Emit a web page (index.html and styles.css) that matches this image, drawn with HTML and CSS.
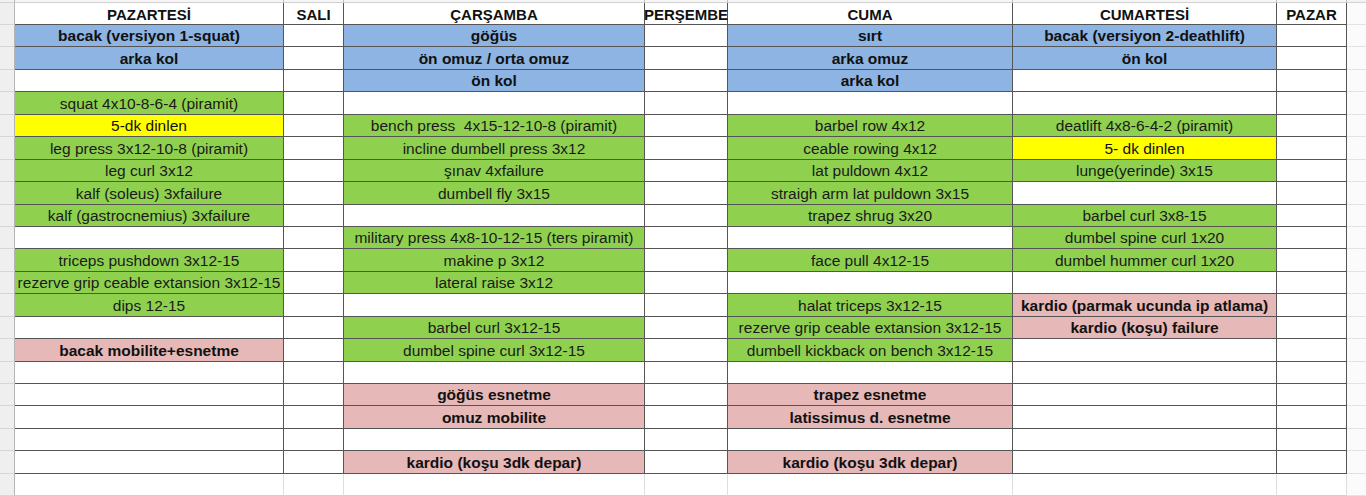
FILE: index.html
```html
<!DOCTYPE html>
<html lang="tr">
<head>
<meta charset="utf-8">
<title>Antrenman programı</title>
<link rel="stylesheet" href="styles.css">
</head>
<body>
<div class="sheet">
  <div class="row top"><div class="gut"></div><div class="c"></div><div class="c"></div><div class="c"></div><div class="c"></div><div class="c"></div><div class="c"></div><div class="c"></div><div class="rg"></div></div>

  <div class="row head"><div class="gut"></div><div class="c">PAZARTESİ</div><div class="c">SALI</div><div class="c">ÇARŞAMBA</div><div class="c">PERŞEMBE</div><div class="c">CUMA</div><div class="c">CUMARTESİ</div><div class="c">PAZAR</div><div class="rg"></div></div>

  <div class="row"><div class="gut"></div><div class="c b">bacak (versiyon 1-squat)</div><div class="c"></div><div class="c b">göğüs</div><div class="c"></div><div class="c b">sırt</div><div class="c b">bacak (versiyon 2-deathlift)</div><div class="c"></div><div class="rg"></div></div>

  <div class="row"><div class="gut"></div><div class="c b">arka kol</div><div class="c"></div><div class="c b">ön omuz / orta omuz</div><div class="c"></div><div class="c b">arka omuz</div><div class="c b">ön kol</div><div class="c"></div><div class="rg"></div></div>

  <div class="row"><div class="gut"></div><div class="c"></div><div class="c"></div><div class="c b">ön kol</div><div class="c"></div><div class="c b">arka kol</div><div class="c"></div><div class="c"></div><div class="rg"></div></div>

  <div class="row"><div class="gut"></div><div class="c g">squat 4x10-8-6-4 (piramit)</div><div class="c"></div><div class="c"></div><div class="c"></div><div class="c"></div><div class="c"></div><div class="c"></div><div class="rg"></div></div>

  <div class="row"><div class="gut"></div><div class="c y">5-dk dinlen</div><div class="c"></div><div class="c g">bench press &nbsp;4x15-12-10-8 (piramit)</div><div class="c"></div><div class="c g">barbel row 4x12</div><div class="c g">deatlift 4x8-6-4-2 (piramit)</div><div class="c"></div><div class="rg"></div></div>

  <div class="row"><div class="gut"></div><div class="c g">leg press 3x12-10-8 (piramit)</div><div class="c"></div><div class="c g">incline dumbell press 3x12</div><div class="c"></div><div class="c g">ceable rowing 4x12</div><div class="c y">5- dk dinlen</div><div class="c"></div><div class="rg"></div></div>

  <div class="row"><div class="gut"></div><div class="c g">leg curl 3x12</div><div class="c"></div><div class="c g">şınav 4xfailure</div><div class="c"></div><div class="c g">lat puldown 4x12</div><div class="c g">lunge(yerinde) 3x15</div><div class="c"></div><div class="rg"></div></div>

  <div class="row"><div class="gut"></div><div class="c g">kalf (soleus) 3xfailure</div><div class="c"></div><div class="c g">dumbell fly 3x15</div><div class="c"></div><div class="c g">straigh arm lat puldown 3x15</div><div class="c"></div><div class="c"></div><div class="rg"></div></div>

  <div class="row"><div class="gut"></div><div class="c g">kalf (gastrocnemius) 3xfailure</div><div class="c"></div><div class="c"></div><div class="c"></div><div class="c g">trapez shrug 3x20</div><div class="c g">barbel curl 3x8-15</div><div class="c"></div><div class="rg"></div></div>

  <div class="row"><div class="gut"></div><div class="c"></div><div class="c"></div><div class="c g">military press 4x8-10-12-15 (ters piramit)</div><div class="c"></div><div class="c"></div><div class="c g">dumbel spine curl 1x20</div><div class="c"></div><div class="rg"></div></div>

  <div class="row"><div class="gut"></div><div class="c g">triceps pushdown 3x12-15</div><div class="c"></div><div class="c g">makine p 3x12</div><div class="c"></div><div class="c g">face pull 4x12-15</div><div class="c g">dumbel hummer curl 1x20</div><div class="c"></div><div class="rg"></div></div>

  <div class="row"><div class="gut"></div><div class="c g">rezerve grip ceable extansion 3x12-15</div><div class="c"></div><div class="c g">lateral raise 3x12</div><div class="c"></div><div class="c"></div><div class="c"></div><div class="c"></div><div class="rg"></div></div>

  <div class="row"><div class="gut"></div><div class="c g">dips 12-15</div><div class="c"></div><div class="c"></div><div class="c"></div><div class="c g">halat triceps 3x12-15</div><div class="c p">kardio (parmak ucunda ip atlama)</div><div class="c"></div><div class="rg"></div></div>

  <div class="row"><div class="gut"></div><div class="c"></div><div class="c"></div><div class="c g">barbel curl 3x12-15</div><div class="c"></div><div class="c g">rezerve grip ceable extansion 3x12-15</div><div class="c p">kardio (koşu) failure</div><div class="c"></div><div class="rg"></div></div>

  <div class="row"><div class="gut"></div><div class="c p">bacak mobilite+esnetme</div><div class="c"></div><div class="c g">dumbel spine curl 3x12-15</div><div class="c"></div><div class="c g">dumbell kickback on bench 3x12-15</div><div class="c"></div><div class="c"></div><div class="rg"></div></div>

  <div class="row"><div class="gut"></div><div class="c"></div><div class="c"></div><div class="c"></div><div class="c"></div><div class="c"></div><div class="c"></div><div class="c"></div><div class="rg"></div></div>

  <div class="row"><div class="gut"></div><div class="c"></div><div class="c"></div><div class="c p">göğüs esnetme</div><div class="c"></div><div class="c p">trapez esnetme</div><div class="c"></div><div class="c"></div><div class="rg"></div></div>

  <div class="row"><div class="gut"></div><div class="c"></div><div class="c"></div><div class="c p">omuz mobilite</div><div class="c"></div><div class="c p">latissimus d. esnetme</div><div class="c"></div><div class="c"></div><div class="rg"></div></div>

  <div class="row"><div class="gut"></div><div class="c"></div><div class="c"></div><div class="c"></div><div class="c"></div><div class="c"></div><div class="c"></div><div class="c"></div><div class="rg"></div></div>

  <div class="row"><div class="gut"></div><div class="c"></div><div class="c"></div><div class="c p">kardio (koşu 3dk depar)</div><div class="c"></div><div class="c p">kardio (koşu 3dk depar)</div><div class="c"></div><div class="c"></div><div class="rg"></div></div>

  <div class="row tail"><div class="gut"></div><div class="c"></div><div class="c"></div><div class="c"></div><div class="c"></div><div class="c"></div><div class="c"></div><div class="c"></div><div class="rg"></div></div>
</div>
</body>
</html>
```

FILE: styles.css
```css
html, body {
  margin: 0;
  padding: 0;
  background: #ffffff;
}

.sheet {
  display: flex;
  flex-direction: column;
  width: 1366px;
  height: 496px;
  overflow: hidden;
  font-family: "Liberation Sans", Arial, sans-serif;
  font-size: 15.5px;
  color: #111111;
}

.row {
  display: grid;
  grid-template-columns: 15px 269px 60px 301px 83px 285px 264px 70px 1fr;
  height: 22.45px;
  flex: none;
}

.row.top {
  height: 3px;
}

.row.head {
  height: 22px;
  font-weight: bold;
  font-size: 15px;
}

.row.tail {
  flex: 1;
  height: auto;
}

.c {
  box-sizing: border-box;
  border-right: 1px solid #555555;
  border-bottom: 1px solid #555555;
  background: #ffffff;
  display: flex;
  align-items: center;
  justify-content: center;
  white-space: nowrap;
  overflow: visible;
  padding-top: 1px;
  line-height: 1;
}

.gut {
  box-sizing: border-box;
  background: #efefef;
  border-right: 1px solid #b5b5b5;
  border-bottom: 1px solid #d6d6d6;
}

.rg {
  box-sizing: border-box;
  background: #fbfbfb;
  border-bottom: 1px solid #e3e3e3;
}

.top .c {
  background: #f6f6f6;
  border-right-color: #bdbdbd;
  border-bottom-color: #d2d2d2;
}

.top .gut,
.top .rg {
  background: #f2f2f2;
  border-bottom-color: #d2d2d2;
}

.tail .c {
  border-right-color: #dedede;
  border-bottom-color: #cfcfcf;
}

.b {
  background: #8db4e2;
  font-weight: bold;
}

.g {
  background: #8fd14f;
  color: #1a1a1a;
}

.y {
  background: #ffff00;
}

.p {
  background: #e6b8b7;
  font-weight: bold;
}
```
